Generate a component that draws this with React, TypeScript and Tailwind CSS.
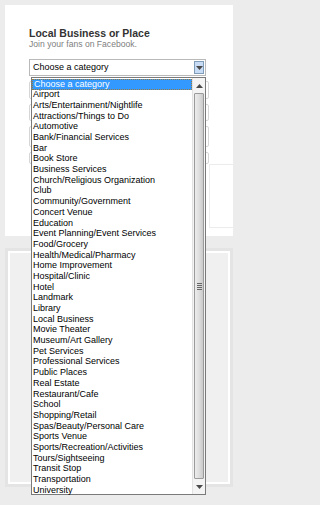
const categories = [
  "Airport",
  "Arts/Entertainment/Nightlife",
  "Attractions/Things to Do",
  "Automotive",
  "Bank/Financial Services",
  "Bar",
  "Book Store",
  "Business Services",
  "Church/Religious Organization",
  "Club",
  "Community/Government",
  "Concert Venue",
  "Education",
  "Event Planning/Event Services",
  "Food/Grocery",
  "Health/Medical/Pharmacy",
  "Home Improvement",
  "Hospital/Clinic",
  "Hotel",
  "Landmark",
  "Library",
  "Local Business",
  "Movie Theater",
  "Museum/Art Gallery",
  "Pet Services",
  "Professional Services",
  "Public Places",
  "Real Estate",
  "Restaurant/Cafe",
  "School",
  "Shopping/Retail",
  "Spas/Beauty/Personal Care",
  "Sports Venue",
  "Sports/Recreation/Activities",
  "Tours/Sightseeing",
  "Transit Stop",
  "Transportation",
  "University",
];

function Arrow({ up = false }: { up?: boolean }) {
  return (
    <svg width="7" height="4" viewBox="0 0 7 4">
      <path d={up ? "M0 4 L3.5 0 L7 4 Z" : "M0 0 L7 0 L3.5 4 Z"} fill="#4a4a4a" />
    </svg>
  );
}

export default function App() {
  return (
    <div className="min-h-[505px] w-full bg-[#ececec] p-[5px] font-['Liberation_Sans',Arial,sans-serif]">
      {/* Card 1 */}
      <div className="relative h-[231px] w-[228px] bg-white pl-[24px] pt-[22px]">
        <h3 className="text-[10.5px] font-bold leading-[12px] text-[#333]">Local Business or Place</h3>
        <p className="text-[8.6px] leading-[11px] text-[#808080]">Join your fans on Facebook.</p>

        {/* select */}
        <div className="mt-[9px] flex h-[17px] w-[177px] items-center justify-between border border-[#b9b9b9] bg-white pl-[3px] pr-[1px]">
          <span className="text-[9px] leading-none text-black">Choose a category</span>
          <div className="flex h-[13px] w-[10px] items-center justify-center border border-[#7f9db9] bg-[#c8dcf5]">
            <Arrow />
          </div>
        </div>

        {/* fields behind the list */}
        <div className="mt-[5px] flex w-[180px] flex-col gap-[5px]">
          <div className="h-[18px] rounded-[2px] border border-[#d6d6d6]" />
          <div className="h-[17px] rounded-[2px] border border-[#d6d6d6]" />
          <div className="h-[21px] rounded-[2px] border border-[#d6d6d6]" />
          <div className="h-[12px] rounded-[2px] border border-[#d6d6d6]" />
        </div>
        <div className="ml-[180px] h-[64px] w-[24px] border border-r-0 border-[#ececec]" />

        {/* open list */}
        <div className="absolute left-[26px] top-[72px] z-10 flex h-[418px] w-[175px] border border-[#7a7a7a] bg-white">
          <ul className="flex-1 pt-[1px] text-[9px] text-black">
            <li className="flex h-[10.7px] items-center border border-dotted border-[#9a7a3a] bg-[#3399ff] pl-[1px] text-white">
              Choose a category
            </li>
            {categories.map((c) => (
              <li key={c} className="flex h-[10.7px] items-center whitespace-nowrap pl-[1px]">
                {c}
              </li>
            ))}
          </ul>

          {/* scrollbar */}
          <div className="flex w-[13px] flex-col border-l border-[#e2e2e2] bg-[#f4f4f4]">
            <div className="flex h-[15px] items-center justify-center">
              <Arrow up />
            </div>
            <div className="mx-[1px] flex flex-1 items-center justify-center rounded-[1px] border border-[#9a9a9a] bg-gradient-to-r from-[#ececec] via-[#dedede] to-[#cbcbcb]">
              <div className="flex flex-col gap-[1px]">
                <div className="h-px w-[5px] bg-[#666]" />
                <div className="h-px w-[5px] bg-[#666]" />
                <div className="h-px w-[5px] bg-[#666]" />
                <div className="h-px w-[5px] bg-[#666]" />
              </div>
            </div>
            <div className="flex h-[15px] items-center justify-center">
              <Arrow />
            </div>
          </div>
        </div>
      </div>

      {/* Card 2 */}
      <div className="mt-[12px] h-[239px] w-[228px] border-[3px] border-[#e4e4e4] bg-white p-[2px]">
        <div className="h-full w-full bg-[#f0f0f0]" />
      </div>
    </div>
  );
}
